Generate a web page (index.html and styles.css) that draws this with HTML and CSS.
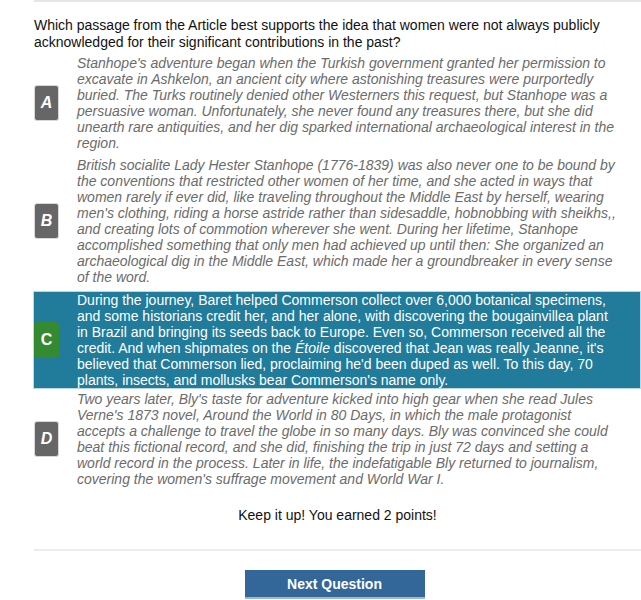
FILE: index.html
```html
<!DOCTYPE html>
<html>
<head>
<meta charset="utf-8">
<link rel="stylesheet" href="styles.css">
</head>
<body>
<div class="quiz">
  <div class="top-rule"></div>
  <p class="question">Which passage from the Article best supports the idea that women were not always publicly acknowledged for their significant contributions in the past?</p>
  <ul class="options">
    <li class="option">
      <span class="badge">A</span>
      <p class="passage">Stanhope's adventure began when the Turkish government granted her permission to excavate in Ashkelon, an ancient city where astonishing treasures were purportedly buried. The Turks routinely denied other Westerners this request, but Stanhope was a persuasive woman. Unfortunately, she never found any treasures there, but she did unearth rare antiquities, and her dig sparked international archaeological interest in the region.</p>
    </li>
    <li class="option">
      <span class="badge">B</span>
      <p class="passage">British socialite Lady Hester Stanhope (1776-1839) was also never one to be bound by the conventions that restricted other women of her time, and she acted in ways that women rarely if ever did, like traveling throughout the Middle East by herself, wearing men's clothing, riding a horse astride rather than sidesaddle, hobnobbing with sheikhs,, and creating lots of commotion wherever she went. During her lifetime, Stanhope accomplished something that only men had achieved up until then: She organized an archaeological dig in the Middle East, which made her a groundbreaker in every sense of the word.</p>
    </li>
    <li class="option option-correct">
      <span class="badge badge-correct">C</span>
      <p class="passage">During the journey, Baret helped Commerson collect over 6,000 botanical specimens, and some historians credit her, and her alone, with discovering the bougainvillea plant in Brazil and bringing its seeds back to Europe. Even so, Commerson received all the credit. And when shipmates on the <em>Étoile</em> discovered that Jean was really Jeanne, it's believed that Commerson lied, proclaiming he'd been duped as well. To this day, 70 plants, insects, and mollusks bear Commerson's name only.</p>
    </li>
    <li class="option">
      <span class="badge">D</span>
      <p class="passage">Two years later, Bly's taste for adventure kicked into high gear when she read Jules Verne's 1873 novel, Around the World in 80 Days, in which the male protagonist accepts a challenge to travel the globe in so many days. Bly was convinced she could beat this fictional record, and she did, finishing the trip in just 72 days and setting a world record in the process. Later in life, the indefatigable Bly returned to journalism, covering the women's suffrage movement and World War I.</p>
    </li>
  </ul>
  <p class="feedback">Keep it up! You earned 2 points!</p>
  <div class="bottom-rule"></div>
  <div class="actions">
    <button class="next-btn">Next Question</button>
  </div>
</div>
</body>
</html>
```

FILE: styles.css
```css
html, body {
  margin: 0;
  padding: 0;
  background: #fff;
}

body {
  font-family: "Liberation Sans", Arial, sans-serif;
  font-size: 14px;
  overflow: hidden;
}

.quiz {
  margin-left: 34px;
  width: 607px;
}

.top-rule {
  height: 2px;
  background: #e6e6e6;
}

.question {
  margin: 15px 0 4px;
  line-height: 17px;
  color: #111;
}

.options {
  list-style: none;
  margin: 0;
  padding: 0;
}

.option {
  display: flex;
  align-items: center;
  margin-bottom: 6px;
}

.badge {
  flex: 0 0 auto;
  width: 23px;
  height: 34px;
  margin-right: 18px;
  border-radius: 3px;
  background: #666;
  border: 1px solid #d9d9d9;
  color: #fff;
  font-weight: bold;
  font-style: italic;
  font-size: 16px;
  display: flex;
  align-items: center;
  justify-content: center;
}

.passage {
  flex: 1;
  margin: 0;
  padding-right: 22px;
  line-height: 16px;
  font-style: italic;
  color: #6b6b6b;
}

.option-correct {
  background: #217b9b;
  border: 1px solid #b9d7e4;
  margin-left: -1px;
  margin-bottom: 2px;
}

.option-correct .passage {
  color: #fff;
  font-style: normal;
}

.badge-correct {
  background: #348a30;
  border-color: #348a30;
  font-style: normal;
}

.feedback {
  margin: 20px 0 0;
  line-height: 16px;
  text-align: center;
  color: #111;
}

.bottom-rule {
  margin-top: 26px;
  height: 2px;
  background: #ececec;
}

.actions {
  display: flex;
  justify-content: center;
  padding-top: 19px;
  padding-right: 6px;
}

.next-btn {
  width: 180px;
  height: 29px;
  border: 0;
  border-bottom: 2px solid #9fb6cc;
  background: #336699;
  color: #fff;
  font-family: "Liberation Sans", Arial, sans-serif;
  font-size: 14px;
  font-weight: bold;
  padding: 0;
}
```
